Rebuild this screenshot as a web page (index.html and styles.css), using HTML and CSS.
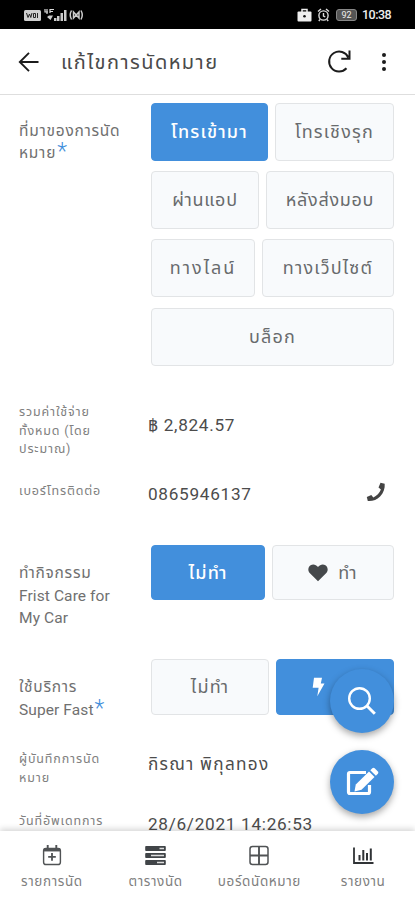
FILE: index.html
```html
<!DOCTYPE html>
<html lang="th">
<head>
<meta charset="utf-8">
<meta name="viewport" content="width=device-width, initial-scale=1">
<title>แก้ไขการนัดหมาย</title>
<link rel="stylesheet" href="styles.css">
</head>
<body>
<div class="app">
  <div class="status">
    <svg class="status-left" width="60" height="14" viewBox="0 0 60 14">
      <rect x="0" y="2" width="17" height="11" rx="1.5" fill="#cfcfcf"/>
      <path d="M2.5 5l1.5 4.5L5.500 6l1.300 3.500L8 5M9.500 5.500v4h2v-4zM13.500 5v5" fill="none" stroke="#222" stroke-width="1"/>
      <path d="M21 1v3h3M23 1v5M26 5V1.500h4M26 3.500h3" fill="none" stroke="#ddd" stroke-width="1.200"/>
      <path d="M23 9l2-1.500h4l-2.500 4.500zM30 13v-3h2.500v3zM33 13V8h2.500v5zM36.500 13V5h2.500v8zM40 13V2h2.500v11z" fill="#ccc"/>
      <path d="M47.500 2.500q-2.500 4.500 0 9M57 2.500q2.500 4.500 0 9M49.500 4l5.500 6v-6l-5.500 6z" fill="none" stroke="#ccc" stroke-width="1.500"/>
    </svg>
    <div class="status-right">
      <svg width="15" height="14" viewBox="0 0 15 14"><path d="M5 4V1.500h5V4" fill="none" stroke="#eee" stroke-width="1.500"/><rect x=".5" y="3.500" width="14" height="10" rx="1" fill="#eee"/><circle cx="7.500" cy="8.300" r="1.300" fill="#111"/></svg>
      <svg width="13" height="14" viewBox="0 0 13 14" fill="none" stroke="#ddd" stroke-width="1.400"><circle cx="6.500" cy="7.500" r="4.600"/><path d="M1 3.500l3-2.500M12 3.500L9 1M6.500 5v3l1.800 1M3 11.500l-1.200 1.500M10 11.500l1.200 1.500"/></svg>
      <span class="battery">92</span>
      <span class="clock">10:38</span>
    </div>
  </div>

  <header class="bar">
    <svg class="back" width="22" height="22" viewBox="0 0 22 22" fill="none" stroke="#1c1c1c" stroke-width="1.900"><path d="M20.500 11H2M11 1.800L1.800 11l9.200 9.200"/></svg>
    <h1 class="title">แก้ไขการนัดหมาย</h1>
    <svg class="reload" width="25" height="25" viewBox="0 0 25 25" fill="none" stroke="#1c1c1c" stroke-width="2"><path d="M19.500 19.300A10 10 0 1 1 21.300 8.500M14.300 9.800h8.200V1.500"/></svg>
    <svg class="more" width="6" height="20" viewBox="0 0 6 20" fill="#1c1c1c"><circle cx="3" cy="3" r="2"/><circle cx="3" cy="10" r="2"/><circle cx="3" cy="17" r="2"/></svg>
  </header>

  <main class="form">
    <section class="row row-source">
      <div class="label"><span class="th">ที่มาของการนัด</span><br><span class="th">หมาย</span><span class="req">*</span></div>
      <div class="options">
        <div class="line line-1"><button class="opt on">โทรเข้ามา</button><button class="opt">โทรเชิงรุก</button></div>
        <div class="line line-2"><button class="opt snug">ผ่านแอป</button><button class="opt snug">หลังส่งมอบ</button></div>
        <div class="line line-3"><button class="opt wide">ทางไลน์</button><button class="opt">ทางเว็ปไซต์</button></div>
        <div class="line"><button class="opt">บล็อก</button></div>
      </div>
    </section>
    <section class="row row-cost">
      <div class="label small">รวมค่าใช้จ่าย<br>ทั้งหมด (โดย<br>ประมาณ)</div>
      <div class="value">฿ 2,824.57</div>
    </section>
    <section class="row row-phone">
      <div class="label small">เบอร์โทรติดต่อ</div>
      <div class="value">0865946137</div>
      <svg class="phone" width="20" height="20" viewBox="0 0 20 20"><path d="M14.500.8l4.200 1c.4 4.800-1.200 9.300-4.600 12.600-3.300 3.300-7.600 5-12.300 4.600L.8 15l4.500-2 2 2.400c3.500-1.500 6.200-4.300 7.600-7.900L12.500 5.400z" fill="#444"/></svg>
    </section>
    <section class="row row-care">
      <div class="label"><span class="th">ทำกิจกรรม</span><br>Frist Care for<br>My Car</div>
      <div class="options">
        <div class="line line-4"><button class="opt on">ไม่ทำ</button><button class="opt"><svg width="20" height="18" viewBox="0 0 20 18"><path d="M10 17.300L1.700 9C-.6 6.500.2 2.800 2.600 1.300 5-.2 8 .5 10 3c2-2.500 5-3.200 7.400-1.700 2.400 1.500 3.200 5.200.9 7.700z" fill="#45484b"/></svg>ทำ</button></div>
      </div>
    </section>
    <section class="row row-fast">
      <div class="label"><span class="th">ใช้บริการ</span><br>Super Fast<span class="req">*</span></div>
      <div class="options">
        <div class="line line-5"><button class="opt">ไม่ทำ</button><button class="opt on bolt"><svg width="13" height="20" viewBox="0 0 13 20"><path d="M2 .8h8L8.800 6.500h3.700L5.300 19.300l1.300-8.500H.7z" fill="#fff"/></svg>ทำ</button></div>
      </div>
    </section>
    <section class="row row-author">
      <div class="label small">ผู้บันทึกการนัด<br>หมาย</div>
      <div class="value name">กิรณา พิกุลทอง</div>
    </section>
    <section class="row row-date">
      <div class="label small">วันที่อัพเดทการ</div>
      <div class="value">28/6/2021 14:26:53</div>
    </section>
  </main>

  <nav class="tabs">
    <div class="tab"><svg width="20" height="22" viewBox="0 0 20 22" fill="none" stroke="#505355"><rect x="1.200" y="3.500" width="17.600" height="17" rx="2.500" stroke-width="1.500"/><path d="M1.500 5h17" stroke-width="3.500"/><path d="M5.500 0v4M14.500 0v4" stroke-width="2"/><path d="M10 8.500v8M6 12.500h8" stroke-width="1.900"/></svg><span>รายการนัด</span></div>
    <div class="tab"><svg width="21" height="20" viewBox="0 0 21 20" ><path d="M1 .5h19q.8 0 .8 1v3q0 1-.8 1H1q-.8 0-.8-1v-3q0-1 .8-1zM1 7.500h19q.8 0 .8 1v3q0 1-.8 1H1q-.8 0-.8-1v-3q0-1 .8-1zM1 14.500h19q.8 0 .8 1v3q0 1-.8 1H1q-.8 0-.8-1v-3q0-1 .8-1z" fill="#414548"/><path d="M14.500 3H19M6 10h13M12 17h7" stroke="#ddd" stroke-width="1.300"/></svg><span>ตารางนัด</span></div>
    <div class="tab"><svg width="20" height="20" viewBox="0 0 20 20" fill="none" stroke="#505355"><rect x="1" y="1" width="18" height="18" rx="2.500" stroke-width="1.500"/><path d="M10 1v18M1 10h18" stroke-width="1.900"/></svg><span>บอร์ดนัดหมาย</span></div>
    <div class="tab"><svg width="21" height="18" viewBox="0 0 21 18" fill="none" stroke="#303336"><path d="M1 1v15.500h19.500" stroke-width="1.800"/><path d="M6.500 14V8.500M10.300 14V3.500M14 14V6.500M17.800 14V2" stroke-width="2"/></svg><span>รายงาน</span></div>
  </nav>

  <div class="fabs">
    <div class="fab"><svg width="30" height="30" viewBox="0 0 30 30" fill="none" stroke="#fff"><circle cx="12.500" cy="12.500" r="10.300" stroke-width="2.400"/><path d="M19.800 19.800l8 8" stroke-width="3"/></svg></div>
    <div class="fab"><svg width="34" height="30" viewBox="0 0 34 30"><path d="M21 5.500H5q-1.500 0-1.500 1.500v18q0 1.500 1.500 1.500h18q1.500 0 1.500-1.500v-7" fill="none" stroke="#fff" stroke-width="3.200"/><path d="M24 4.500l5.500 5.500L16.500 22.800l-7 1.700 1.300-7z" fill="#fff"/><path d="M25.300 3.200l2-2q1.200-1 2.400 0l3.200 3.200q1 1.200 0 2.400l-2 2z" fill="#fff"/></svg></div>
  </div>
</div>
</body>
</html>
```
FILE: styles.css
```css
* { box-sizing: border-box; }
body { margin: 0; background: #fff; font-family: Roboto, "Noto Sans Thai", "Noto Sans", sans-serif; color: #444; }
.app { position: relative; width: 415px; height: 900px; overflow: hidden; display: flex; flex-direction: column; }

.status { flex: none; height: 29px; background: #000; display: flex; justify-content: space-between; align-items: center; padding: 1px 24px 0 24px; }
.status-right { display: flex; align-items: center; gap: 5px; color: #eee; }
.battery { width: 21px; height: 12px; border-radius: 3px; background: #555; border: 1px solid #888; font: 9px/10px Roboto, sans-serif; text-align: center; margin-left: 1px; }
.clock { font: 500 12.5px/14px Roboto, sans-serif; width: 29px; letter-spacing: -.5px; }

.bar { flex: none; height: 66px; border-bottom: 1px solid #dedede; display: flex; align-items: center; padding: 0 28px 0 18px; }
.title { margin: 0 0 0 21px; flex: 1; font-size: 20px; font-weight: 400; line-height: 30px; letter-spacing: 1.450px; color: #4a4a4a; white-space: nowrap; }
.reload { margin-right: 29px; }

.form { flex: 1; min-height: 0; overflow: hidden; }
.row { display: grid; grid-template-columns: 129px 243px; padding-left: 19px; column-gap: 3px; align-items: start; }
.label { font-size: 15.5px; line-height: 22.500px; letter-spacing: .1px; color: #707070; white-space: nowrap; }
.label .th { letter-spacing: .75px; }
.label.small { font-size: 12.500px; line-height: 18.500px; letter-spacing: .85px; color: #808080; }
.req { color: #3f8edb; font-size: 23px; font-weight: 300; line-height: 10px; vertical-align: -1px; margin-left: 1px; }
.value { font-size: 17.200px; line-height: 22px; letter-spacing: .7px; margin-left: -3px; color: #4c4c4c; white-space: nowrap; }
.value.name { letter-spacing: 1.300px; }

.options { display: grid; gap: 10.400px; }
.line { display: grid; column-gap: 7px; height: 58px; }
.line-1 { grid-template-columns: 117px 1fr; }
.line-2 { grid-template-columns: 108px 1fr; }
.line-3 { grid-template-columns: 104px 1fr; }
.line-4 { grid-template-columns: 114px 1fr; height: 55px; }
.line-5 { grid-template-columns: 118px 1fr; height: 56px; }
.opt { min-width: 0; padding: 0; margin: 0; border: 1.500px solid #e2e4e6; border-radius: 4px; background: #f8fafc; color: #686b6d; font: 18px/26px Roboto, "Noto Sans Thai", sans-serif; letter-spacing: 1.200px; display: flex; align-items: center; justify-content: center; gap: 10px; white-space: nowrap; }
.opt.snug { letter-spacing: .7px; }
.opt.wide { letter-spacing: 2px; }
.opt.on { background: #428fdc; border-color: #428fdc; color: #fff; font-weight: 500; }

.row-source { padding-top: 7.700px; height: 308px; }
.row-source .label { padding-top: 17px; }
.row-cost { height: 79px; }
.row-cost .value { padding-top: 11px; }
.row-phone { height: 63px; grid-template-columns: 129px 212px auto; }
.row-phone .value { padding-top: 1px; }
.row-care { height: 114px; }
.row-care .label, .row-fast .label { padding-top: 17px; }
.row-fast { height: 91px; }
.opt.bolt { justify-content: flex-start; padding-left: 35px; }
.row-author { height: 62px; }
.row-author .value { padding-top: 3px; }
.row-date .value { padding-top: 1px; }

.tabs { flex: none; height: 69px; background: #fff; box-shadow: 0 -2px 6px rgba(0,0,0,.17); display: grid; grid-template-columns: repeat(4, 1fr); position: relative; }
.tab { display: flex; flex-direction: column; align-items: center; font-size: 13.500px; line-height: 18px; letter-spacing: .600px; color: #808080; white-space: nowrap; padding-top: 14px; }
.tab svg { height: 21px; margin-bottom: 6px; }

.fabs { position: absolute; left: 330px; top: 669px; display: grid; gap: 17px; }
.fab { width: 64px; height: 64px; border-radius: 50%; background: #428fdc; box-shadow: 0 3px 7px rgba(0,0,0,.35); display: flex; align-items: center; justify-content: center; }
```
